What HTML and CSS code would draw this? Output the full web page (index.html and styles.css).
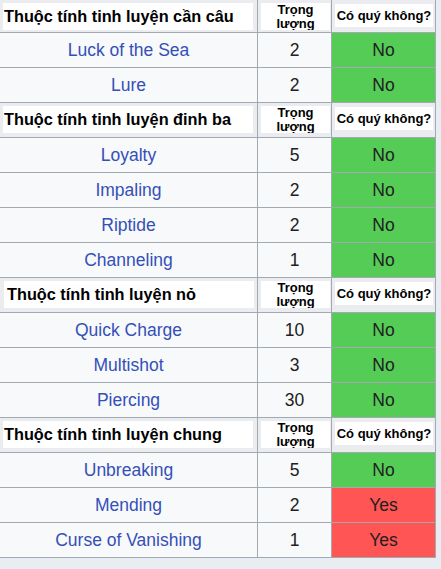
FILE: index.html
```html
<!DOCTYPE html>
<html lang="vi">
<head>
<meta charset="utf-8">
<title>Thuộc tính tinh luyện</title>
<link rel="stylesheet" href="styles.css">
</head>
<body>
<div class="enchant-table">
  <div class="cell head top"><div class="box-name">Thuộc tính tinh luyện cần câu</div></div>
  <div class="cell head top"><div class="box-weight">Trọng lượng</div></div>
  <div class="cell head top"><div class="box-rare">Có quý không?</div></div>

  <div class="cell name">Luck of the Sea</div><div class="cell">2</div><div class="cell no">No</div>
  <div class="cell name">Lure</div><div class="cell">2</div><div class="cell no">No</div>

  <div class="cell head"><div class="box-name">Thuộc tính tinh luyện đinh ba</div></div>
  <div class="cell head"><div class="box-weight">Trọng lượng</div></div>
  <div class="cell head"><div class="box-rare">Có quý không?</div></div>

  <div class="cell name">Loyalty</div><div class="cell">5</div><div class="cell no">No</div>
  <div class="cell name">Impaling</div><div class="cell">2</div><div class="cell no">No</div>
  <div class="cell name">Riptide</div><div class="cell">2</div><div class="cell no">No</div>
  <div class="cell name">Channeling</div><div class="cell">1</div><div class="cell no">No</div>

  <div class="cell head"><div class="box-name indent">Thuộc tính tinh luyện nỏ</div></div>
  <div class="cell head"><div class="box-weight">Trọng lượng</div></div>
  <div class="cell head"><div class="box-rare">Có quý không?</div></div>

  <div class="cell name">Quick Charge</div><div class="cell">10</div><div class="cell no">No</div>
  <div class="cell name">Multishot</div><div class="cell">3</div><div class="cell no">No</div>
  <div class="cell name">Piercing</div><div class="cell">30</div><div class="cell no">No</div>

  <div class="cell head"><div class="box-name">Thuộc tính tinh luyện chung</div></div>
  <div class="cell head"><div class="box-weight">Trọng lượng</div></div>
  <div class="cell head"><div class="box-rare">Có quý không?</div></div>

  <div class="cell name">Unbreaking</div><div class="cell">5</div><div class="cell no">No</div>
  <div class="cell name">Mending</div><div class="cell">2</div><div class="cell yes">Yes</div>
  <div class="cell name">Curse of Vanishing</div><div class="cell">1</div><div class="cell yes">Yes</div>
</div>
</body>
</html>
```

FILE: styles.css
```css
body {
  margin: 0;
  background: #e7edf3;
  font-family: "Liberation Sans", Arial, sans-serif;
}

.enchant-table {
  display: grid;
  grid-template-columns: 258px 74px 104px;
  width: 436px;
  background: #f8f9fa;
}

.cell {
  box-sizing: border-box;
  height: 35px;
  border-right: 1px solid #a2a9b1;
  border-bottom: 1px solid #a2a9b1;
  display: flex;
  align-items: center;
  justify-content: center;
  font-size: 17.5px;
  color: #202122;
}

.cell.top {
  height: 33px;
}

.name {
  color: #3450b8;
}

.no {
  background: #5c5;
}

.yes {
  background: #f55;
}

.head {
  background: #eaecf0;
  align-items: flex-start;
  justify-content: flex-start;
  padding: 3px 0 0 3px;
}

.box-name {
  box-sizing: border-box;
  width: 250px;
  height: 27px;
  padding-left: 1px;
  background: #fff;
  color: #000;
  font-size: 16.3px;
  font-weight: bold;
  line-height: 27px;
  white-space: nowrap;
}

.box-name.indent {
  margin-left: 1px;
  padding-left: 3px;
}

.box-weight {
  box-sizing: border-box;
  width: 69px;
  height: 27px;
  overflow: hidden;
  background: #fff;
  color: #000;
  font-size: 13px;
  font-weight: bold;
  line-height: 14px;
  text-align: center;
}

.box-rare {
  width: 98px;
  height: 23px;
  margin-top: 1px;
  background: #fff;
  color: #000;
  font-size: 13px;
  font-weight: bold;
  line-height: 23px;
  text-align: center;
  white-space: nowrap;
}
```
